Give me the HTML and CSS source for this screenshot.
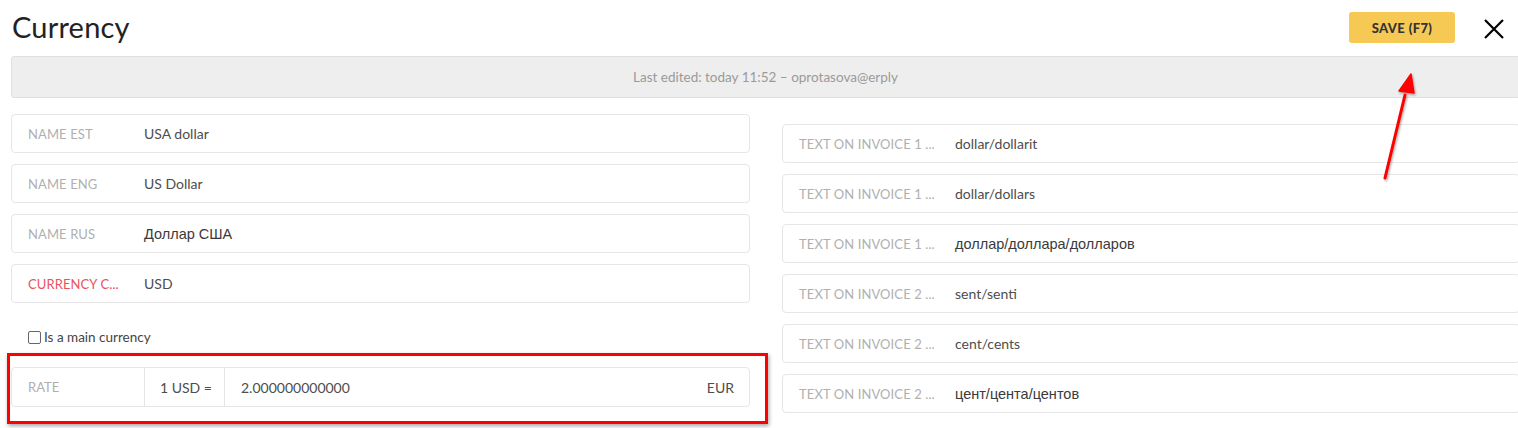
FILE: index.html
```html
<!DOCTYPE html>
<html>
<head>
<meta charset="utf-8">
<link rel="stylesheet" href="styles.css">
</head>
<body>
<div class="page">
  <header class="header">
    <h1 class="title">Currency</h1>
    <div class="actions">
      <button class="save">SAVE (F7)</button>
      <span class="close">
        <svg width="20" height="20" viewBox="0 0 20 20"><path d="M1 1 L19 19 M19 1 L1 19" stroke="#000" stroke-width="2.2" fill="none"/></svg>
      </span>
    </div>
  </header>
  <div class="edited">Last edited: today 11:52 – oprotasova@erply</div>
  <div class="content">
    <div class="col-left">
      <div class="field"><span class="label">NAME EST</span><span class="value">USA dollar</span></div>
      <div class="field"><span class="label">NAME ENG</span><span class="value">US Dollar</span></div>
      <div class="field"><span class="label">NAME RUS</span><span class="value ru">Доллар США</span></div>
      <div class="field"><span class="label required">CURRENCY C...</span><span class="value">USD</span></div>
      <label class="check"><span class="box"></span>Is a main currency</label>
      <div class="rate">
        <span class="rate-label">RATE</span>
        <span class="rate-unit">1 USD =</span>
        <span class="rate-value"><span>2.000000000000</span><span class="rate-cur">EUR</span></span>
      </div>
    </div>
    <div class="col-right">
      <div class="field"><span class="label wide">TEXT ON INVOICE 1 ...</span><span class="value">dollar/dollarit</span></div>
      <div class="field"><span class="label wide">TEXT ON INVOICE 1 ...</span><span class="value">dollar/dollars</span></div>
      <div class="field"><span class="label wide">TEXT ON INVOICE 1 ...</span><span class="value ru">доллар/доллара/долларов</span></div>
      <div class="field"><span class="label wide">TEXT ON INVOICE 2 ...</span><span class="value">sent/senti</span></div>
      <div class="field"><span class="label wide">TEXT ON INVOICE 2 ...</span><span class="value">cent/cents</span></div>
      <div class="field"><span class="label wide">TEXT ON INVOICE 2 ...</span><span class="value ru">цент/цента/центов</span></div>
    </div>
  </div>
  <div class="highlight"></div>
  <svg class="arrow" width="60" height="120" viewBox="1370 68 60 120">
    <defs><filter id="sh" x="-50%" y="-50%" width="200%" height="200%"><feDropShadow dx="1" dy="1.5" stdDeviation="1.2" flood-color="#000" flood-opacity="0.35"/></filter></defs>
    <g filter="url(#sh)">
      <path d="M1385 178 L1405 95" stroke="#ff0000" stroke-width="3" fill="none" stroke-linecap="round"/>
      <path d="M1411 74 L1399 91 L1414 93 Z" fill="#ff0000" stroke="#ff0000" stroke-width="1.5" stroke-linejoin="round"/>
    </g>
  </svg>
</div>
</body>
</html>
```
FILE: styles.css
```css
* { box-sizing: border-box; }
html, body { margin: 0; padding: 0; overflow: hidden; background: #fff; }
body { font-family: "Lato", "Open Sans", sans-serif; color: #444; }
.page { position: relative; width: 1530px; height: 428px; padding: 0 0 0 11px; }
.header { display: flex; justify-content: space-between; align-items: flex-start; height: 56px; }
.title { margin: 9px 0 0 1px; font-size: 29px; font-weight: 400; color: #222; letter-spacing: 0.2px; }
.actions { display: flex; align-items: center; margin-top: 12px; margin-right: 26px; }
.save { width: 106px; height: 31px; border: none; border-radius: 3px; background: #f6c955; font-family: inherit; font-weight: 900; font-size: 13px; color: #333; letter-spacing: 0.4px; padding: 0; }
.close { display: flex; margin-left: 29px; margin-top: 2px; }
.edited { width: 1509px; height: 42px; background: #eeeeee; border: 1px solid #e0e0e0; border-radius: 3px; display: flex; align-items: center; justify-content: center; font-size: 13.5px; color: #9a9a9a; }
.content { display: flex; margin-top: 16px; }
.col-left { width: 739px; display: flex; flex-direction: column; gap: 11px; }
.col-right { width: 738px; margin-left: 32px; margin-top: 10px; display: flex; flex-direction: column; gap: 11px; }
.field { height: 39px; border: 1px solid #e6e6e6; border-radius: 4px; display: flex; align-items: center; padding-left: 16px; }
.label { width: 116px; font-size: 13px; color: #b0b0b0; letter-spacing: 0.1px; white-space: nowrap; }
.label.wide { width: 156px; }
.label.required { color: #e8535e; }
.value { font-size: 14px; color: #4d4d4d; }
.value.ru { font-family: "Liberation Sans", Arial, sans-serif; font-size: 14.5px; color: #3a3a3a; }
.check { display: flex; align-items: center; margin: 16px 0 0 17px; height: 14px; font-size: 13.5px; color: #444; }
.box { width: 13px; height: 13px; border: 1.5px solid #666; border-radius: 2px; margin-right: 3px; background: #fff; }
.rate { margin-top: 12px; height: 40px; border: 1px solid #e6e6e6; border-radius: 4px; display: flex; align-items: stretch; }
.rate > span { display: flex; align-items: center; }
.rate-label { width: 133px; padding-left: 16px; font-size: 13px; color: #b0b0b0; border-right: 1px solid #e6e6e6; }
.rate-unit { width: 80px; padding-left: 15px; font-size: 14px; color: #4d4d4d; border-right: 1px solid #e6e6e6; }
.rate-value { flex: 1; justify-content: space-between; padding: 0 15px 0 16px; font-size: 14px; color: #4d4d4d; }
.highlight { position: absolute; left: 7px; top: 353px; width: 761px; height: 71px; border: 3px solid #ff0000; box-shadow: 1px 2px 4px rgba(0,0,0,0.35); pointer-events: none; }
.arrow { position: absolute; left: 1370px; top: 68px; overflow: visible; }
```
